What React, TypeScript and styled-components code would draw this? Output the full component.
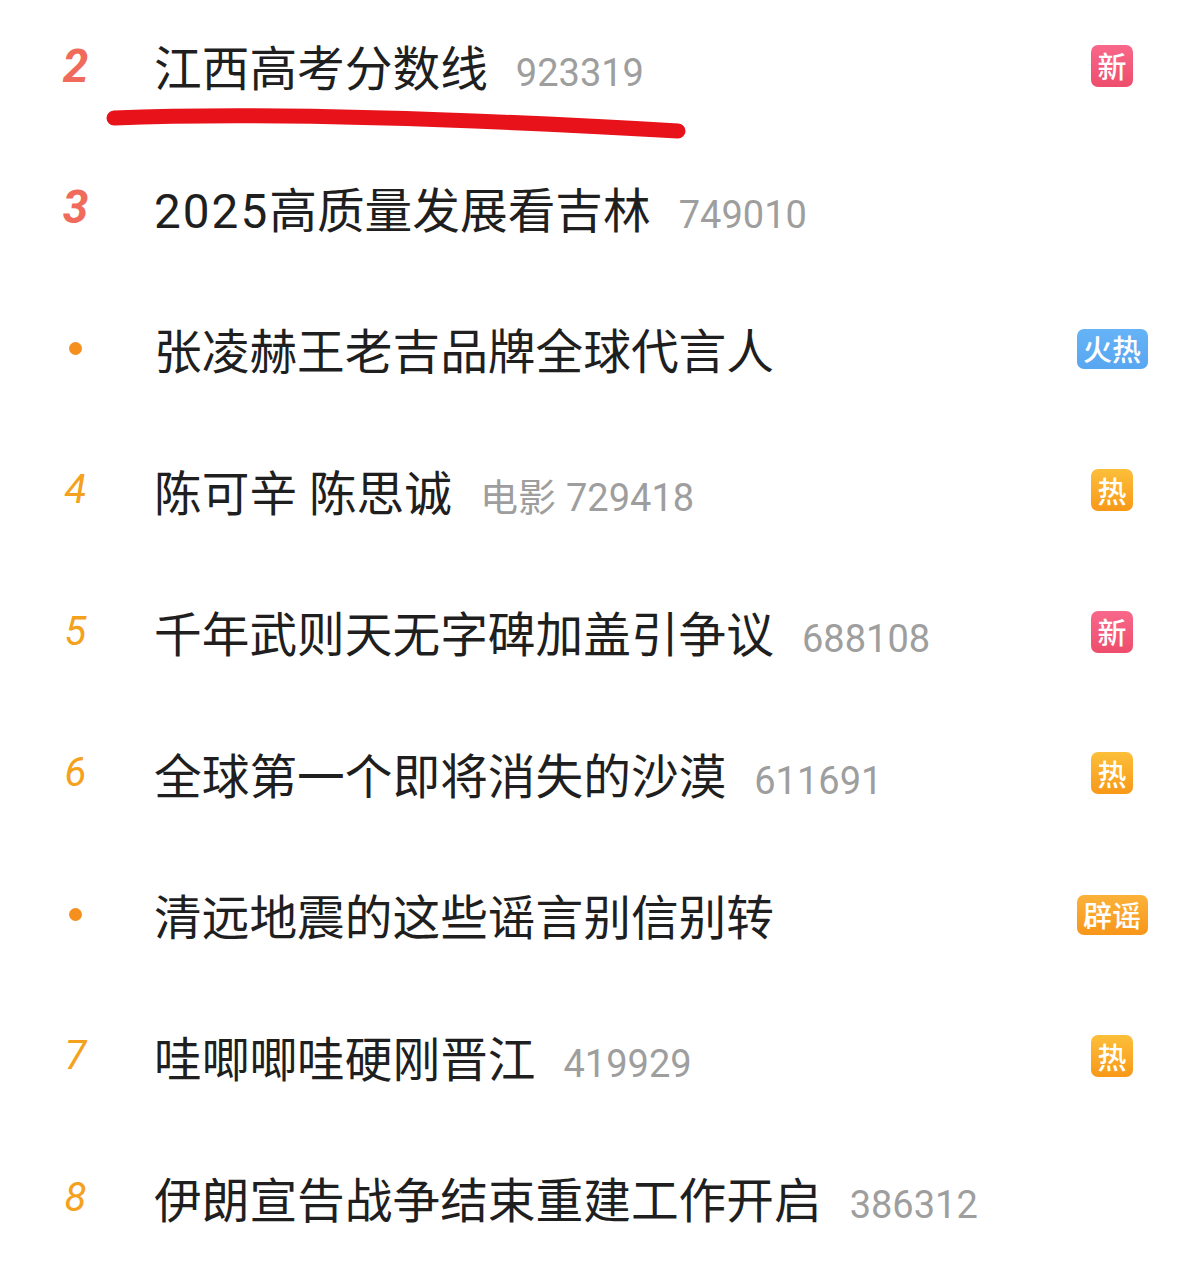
import React from "react";
import styled, { createGlobalStyle, css } from "styled-components";

const GlobalStyle = createGlobalStyle`
  html, body {
    margin: 0;
    padding: 0;
    background: #ffffff;
  }
  body {
    font-family: Roboto, "Noto Sans CJK SC", sans-serif;
    overflow: hidden;
  }
`;

type BadgeKind = "new" | "fire" | "hot" | "rumor";
type RankKind = "top" | "normal" | "dot";

interface Item {
  rank?: number;
  title: string;
  category?: string;
  count?: string;
  badge?: BadgeKind;
}

const items: Item[] = [
  { rank: 2, title: "江西高考分数线", count: "923319", badge: "new" },
  { rank: 3, title: "2025高质量发展看吉林", count: "749010" },
  { title: "张凌赫王老吉品牌全球代言人", badge: "fire" },
  { rank: 4, title: "陈可辛 陈思诚", category: "电影", count: "729418", badge: "hot" },
  { rank: 5, title: "千年武则天无字碑加盖引争议", count: "688108", badge: "new" },
  { rank: 6, title: "全球第一个即将消失的沙漠", count: "611691", badge: "hot" },
  { title: "清远地震的这些谣言别信别转", badge: "rumor" },
  { rank: 7, title: "哇唧唧哇硬刚晋江", count: "419929", badge: "hot" },
  { rank: 8, title: "伊朗宣告战争结束重建工作开启", count: "386312" },
];

const badgeText: Record<BadgeKind, string> = {
  new: "新",
  fire: "火热",
  hot: "热",
  rumor: "辟谣",
};

const Page = styled.div`
  position: relative;
  width: 1179px;
  height: 1271px;
  overflow: hidden;
  background: #ffffff;
`;

const List = styled.ul`
  list-style: none;
  margin: -5px 0 0 0;
  padding: 0;
`;

const Row = styled.li`
  display: grid;
  grid-template-columns: 151px 1fr 80px;
  align-items: center;
  height: 141.5px;
  padding-right: 27px;
`;

const RankCell = styled.div<{ $kind: RankKind }>`
  display: flex;
  justify-content: center;
  align-items: center;
  font-family: Roboto, "Liberation Sans", sans-serif;
  font-style: italic;
  line-height: 1;
  ${(p) =>
    p.$kind === "top"
      ? css`
          color: #f06b5b;
          font-size: 46px;
          font-weight: 700;
        `
      : css`
          color: #f4a11d;
          font-size: 40px;
          font-weight: 400;
        `}
`;

const Dot = styled.span`
  display: block;
  width: 13px;
  height: 13px;
  border-radius: 50%;
  background: #f5901e;
`;

const TitleLine = styled.div`
  display: flex;
  align-items: baseline;
  margin-left: 3px;
  white-space: nowrap;
`;

const Title = styled.span`
  font-family: Roboto, "Noto Sans CJK SC", sans-serif;
  font-size: 47.7px;
  color: #1f1f1f;
  font-weight: 400;
`;

const Digits = styled.span`
  letter-spacing: 2px;
`;

const Meta = styled.span`
  margin-left: 28px;
  font-family: Roboto, "Noto Sans CJK SC", sans-serif;
  font-size: 38px;
  color: #9e9e9e;
`;

const Category = styled.span`
  margin-right: 10px;
`;

const BadgeCell = styled.div`
  display: flex;
  justify-content: center;
  align-items: center;
`;

const badgeColors: Record<BadgeKind, string> = {
  new: "linear-gradient(180deg, #f8688a 0%, #ee4d6c 100%)",
  fire: "linear-gradient(180deg, #66b3f7 0%, #57a6f0 100%)",
  hot: "linear-gradient(180deg, #fcbf3a 0%, #f89818 100%)",
  rumor: "linear-gradient(180deg, #fbb23a 0%, #f8961a 100%)",
};

const Badge = styled.span<{ $kind: BadgeKind; $wide: boolean }>`
  display: flex;
  justify-content: center;
  align-items: center;
  height: ${(p) => (p.$wide ? "40px" : "42px")};
  width: ${(p) => (p.$wide ? "71px" : "42px")};
  border-radius: 7px;
  background: ${(p) => badgeColors[p.$kind]};
  color: #ffffff;
  font-family: "Noto Sans CJK SC", sans-serif;
  font-size: 29px;
  font-weight: 500;
  line-height: 1;
`;

const Scribble = styled.svg`
  position: absolute;
  left: 0;
  top: 0;
  pointer-events: none;
`;

function RankMark({ rank }: { rank?: number }) {
  if (rank === undefined) {
    return (
      <RankCell $kind="dot">
        <Dot />
      </RankCell>
    );
  }
  return <RankCell $kind={rank <= 3 ? "top" : "normal"}>{rank}</RankCell>;
}

function TitleText({ text }: { text: string }) {
  const parts = text.split(/(\d+)/).filter((p) => p.length > 0);
  return (
    <Title>
      {parts.map((p, i) => (/^\d+$/.test(p) ? <Digits key={i}>{p}</Digits> : <React.Fragment key={i}>{p}</React.Fragment>))}
    </Title>
  );
}

export default function App() {
  return (
    <>
      <GlobalStyle />
      <Page>
        <List>
          {items.map((it, i) => (
            <Row key={i}>
              <RankMark rank={it.rank} />
              <TitleLine>
                <TitleText text={it.title} />
                {(it.count || it.category) && (
                  <Meta>
                    {it.category && <Category>{it.category}</Category>}
                    {it.count}
                  </Meta>
                )}
              </TitleLine>
              <BadgeCell>
                {it.badge && (
                  <Badge $kind={it.badge} $wide={badgeText[it.badge].length > 1}>
                    {badgeText[it.badge]}
                  </Badge>
                )}
              </BadgeCell>
            </Row>
          ))}
        </List>
        <Scribble width="1179" height="1271" viewBox="0 0 1179 1271">
          <path
            d="M 114 118 C 260 112, 470 119, 678 131"
            fill="none"
            stroke="#e8121b"
            strokeWidth="15"
            strokeLinecap="round"
          />
        </Scribble>
      </Page>
    </>
  );
}
